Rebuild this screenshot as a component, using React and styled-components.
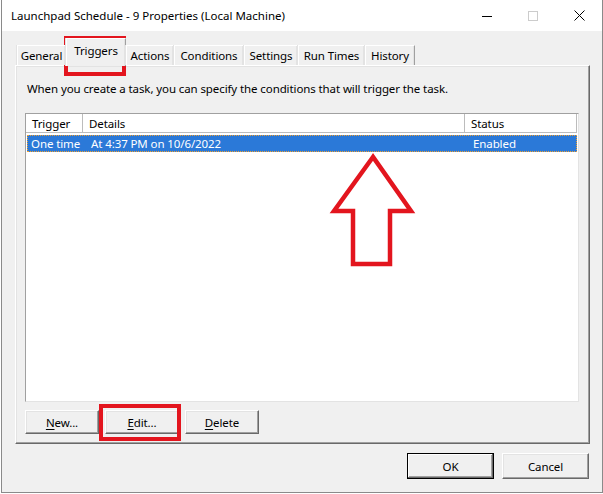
import React from "react";
import styled, { createGlobalStyle } from "styled-components";

const Global = createGlobalStyle`
  html, body { margin: 0; padding: 0; background: #ffffff; }
  body { font-family: "Noto Sans", "Segoe UI", sans-serif; font-size: 11.5px; letter-spacing: -0.1px; color: #000; }
  * { box-sizing: border-box; }
`;

const Stage = styled.div`
  position: relative;
  width: 603px;
  height: 494px;
  overflow: hidden;
`;

const Window = styled.div`
  margin-left: 1px;
  width: 602px;
  height: 493px;
  border: 1px solid #8a8a8a;
  border-top: none;
  background: #f0f0f0;
  display: flex;
  flex-direction: column;
`;

const TitleBar = styled.div`
  height: 31px;
  background: #ffffff;
  display: flex;
  align-items: center;
  padding-left: 9px;
`;

const Title = styled.div`
  flex: 1;
  font-size: 11.5px;
  letter-spacing: 0;
  color: #000;
  padding-bottom: 1px;
`;

const CaptionButton = styled.div`
  width: 46px;
  height: 31px;
  display: flex;
  align-items: center;
  justify-content: center;
`;

const Content = styled.div`
  flex: 1;
  display: flex;
  flex-direction: column;
  padding: 7px 12px 13px 13px;
`;

const TabRow = styled.div`
  display: flex;
  align-items: flex-end;
  height: 27px;
  padding-left: 2px;
  position: relative;
  z-index: 1;
`;

const Tab = styled.div`
  width: ${(p) => p.$w}px;
  height: ${(p) => (p.$active ? 28 : 20)}px;
  margin-bottom: ${(p) => (p.$active ? -1 : 0)}px;
  display: flex;
  align-items: ${(p) => (p.$active ? "flex-start" : "center")};
  justify-content: center;
  padding-top: ${(p) => (p.$active ? 4 : 0)}px;
  background: #f0f0f0;
  border-top: 1px solid #ffffff;
  border-left: 1px solid #ffffff;
  border-right: 1px solid #a0a0a0;
  box-shadow: inset -1px 0 0 #e3e3e3, -1px 0 0 #e3e3e3;
  white-space: nowrap;
`;

const Panel = styled.div`
  height: 379px;
  display: flex;
  flex-direction: column;
  padding: 15px 10px 0 9px;
  border-top: 1px solid #ffffff;
  border-left: 1px solid #ffffff;
  border-right: 1px solid #696969;
  border-bottom: 1px solid #696969;
  box-shadow: inset -1px -1px 0 #a0a0a0, inset 1px 1px 0 #e3e3e3;
`;

const Description = styled.div`
  padding-left: 2px;
  line-height: 16px;
  white-space: nowrap;
`;

const ListView = styled.div`
  margin-top: 16px;
  height: 289px;
  background: #ffffff;
  border-top: 1px solid #a0a0a0;
  border-left: 1px solid #a0a0a0;
  border-right: 1px solid #e3e3e3;
  border-bottom: 1px solid #e3e3e3;
  display: flex;
  flex-direction: column;
`;

const cols = "57px 382px 1fr";

const HeaderRow = styled.div`
  display: grid;
  grid-template-columns: ${cols};
  height: 19px;
  margin-right: 1px;
  border-bottom: 1px solid #bcbcbc;
  border-right: 1px solid #bcbcbc;
`;

const HeaderCell = styled.div`
  display: flex;
  align-items: center;
  padding: 1px 0 0 6px;
  border-right: ${(p) => (p.$last ? "none" : "1px solid #bcbcbc")};
`;

const Row = styled.div`
  display: grid;
  grid-template-columns: ${cols};
  height: 17px;
  margin: 2px 1px 0 1px;
  background: ${(p) => (p.$selected ? "#2b79d8" : "transparent")};
  color: ${(p) => (p.$selected ? "#ffffff" : "#000")};
  outline: ${(p) => (p.$selected ? "1px dotted #f0a030" : "none")};
  outline-offset: -1px;
`;

const Cell = styled.div`
  display: flex;
  align-items: center;
  padding-left: ${(p) => p.$pad}px;
  white-space: nowrap;
`;

const ButtonRow = styled.div`
  display: flex;
  gap: 6px;
  margin-top: 8px;
`;

const Button = styled.div`
  width: ${(p) => p.$w}px;
  height: ${(p) => p.$h}px;
  display: flex;
  align-items: center;
  justify-content: center;
  background: #f0f0f0;
  border-top: 1px solid ${(p) => (p.$default ? "#000" : "#ffffff")};
  border-left: 1px solid ${(p) => (p.$default ? "#000" : "#ffffff")};
  border-right: 1px solid ${(p) => (p.$default ? "#000" : "#696969")};
  border-bottom: 1px solid ${(p) => (p.$default ? "#000" : "#696969")};
  box-shadow: ${(p) =>
    p.$default
      ? "inset -1px -1px 0 #696969, inset 1px 1px 0 #ffffff, inset -2px -2px 0 #a0a0a0"
      : "inset -1px -1px 0 #a0a0a0, inset 1px 1px 0 #e3e3e3"};
`;

const Key = styled.span`
  text-decoration: underline;
  text-underline-offset: 2px;
`;

const Footer = styled.div`
  display: flex;
  justify-content: flex-end;
  gap: 8px;
  margin-top: 9px;
  padding-right: 1px;
`;

const Overlay = styled.svg`
  position: absolute;
  left: 0;
  top: 0;
  pointer-events: none;
`;

const tabs = [
  { label: "General", w: 49 },
  { label: "Triggers", w: 60, active: true },
  { label: "Actions", w: 48 },
  { label: "Conditions", w: 70 },
  { label: "Settings", w: 54 },
  { label: "Run Times", w: 67 },
  { label: "History", w: 50 },
];

export default function App() {
  return (
    <>
      <Global />
      <Stage>
        <Window>
          <TitleBar>
            <Title>Launchpad Schedule - 9 Properties (Local Machine)</Title>
            <CaptionButton>
              <svg width="10" height="10" viewBox="0 0 10 10">
                <path d="M0 5.5H10" stroke="#000" strokeWidth="1" />
              </svg>
            </CaptionButton>
            <CaptionButton>
              <svg width="10" height="10" viewBox="0 0 10 10">
                <rect x="0.5" y="0.5" width="9" height="9" fill="none" stroke="#cccccc" strokeWidth="1" />
              </svg>
            </CaptionButton>
            <CaptionButton>
              <svg width="11" height="11" viewBox="0 0 11 11">
                <path d="M0.5 0.5L10.5 10.5M10.5 0.5L0.5 10.5" stroke="#000" strokeWidth="1" />
              </svg>
            </CaptionButton>
          </TitleBar>
          <Content>
            <TabRow>
              {tabs.map((t) => (
                <Tab key={t.label} $w={t.w} $active={t.active}>
                  {t.label}
                </Tab>
              ))}
            </TabRow>
            <Panel>
              <Description>
                When you create a task, you can specify the conditions that will trigger the task.
              </Description>
              <ListView>
                <HeaderRow>
                  <HeaderCell>Trigger</HeaderCell>
                  <HeaderCell>Details</HeaderCell>
                  <HeaderCell $last>Status</HeaderCell>
                </HeaderRow>
                <Row $selected>
                  <Cell $pad={4}>One time</Cell>
                  <Cell $pad={7}>At 4:37 PM on 10/6/2022</Cell>
                  <Cell $pad={7}>Enabled</Cell>
                </Row>
              </ListView>
              <ButtonRow>
                <Button $w={74} $h={24}>
                  <span><Key>N</Key>ew...</span>
                </Button>
                <Button $w={74} $h={24}>
                  <span><Key>E</Key>dit...</span>
                </Button>
                <Button $w={74} $h={24}>
                  <span><Key>D</Key>elete</span>
                </Button>
              </ButtonRow>
            </Panel>
            <Footer>
              <Button $w={87} $h={26} $default>OK</Button>
              <Button $w={87} $h={26}>Cancel</Button>
            </Footer>
          </Content>
        </Window>
        <Overlay width="603" height="494" viewBox="0 0 603 494">
          <rect x="66" y="38" width="58" height="36" fill="none" stroke="#e3151e" strokeWidth="4" />
          <rect x="101" y="406" width="78" height="33" fill="none" stroke="#e3151e" strokeWidth="4" />
          <polygon
            points="373,157 334,211 353,211 353,264 390,264 390,211 411,211"
            fill="none"
            stroke="#e3151e"
            strokeWidth="4.5"
            strokeLinejoin="miter"
          />
        </Overlay>
      </Stage>
    </>
  );
}
